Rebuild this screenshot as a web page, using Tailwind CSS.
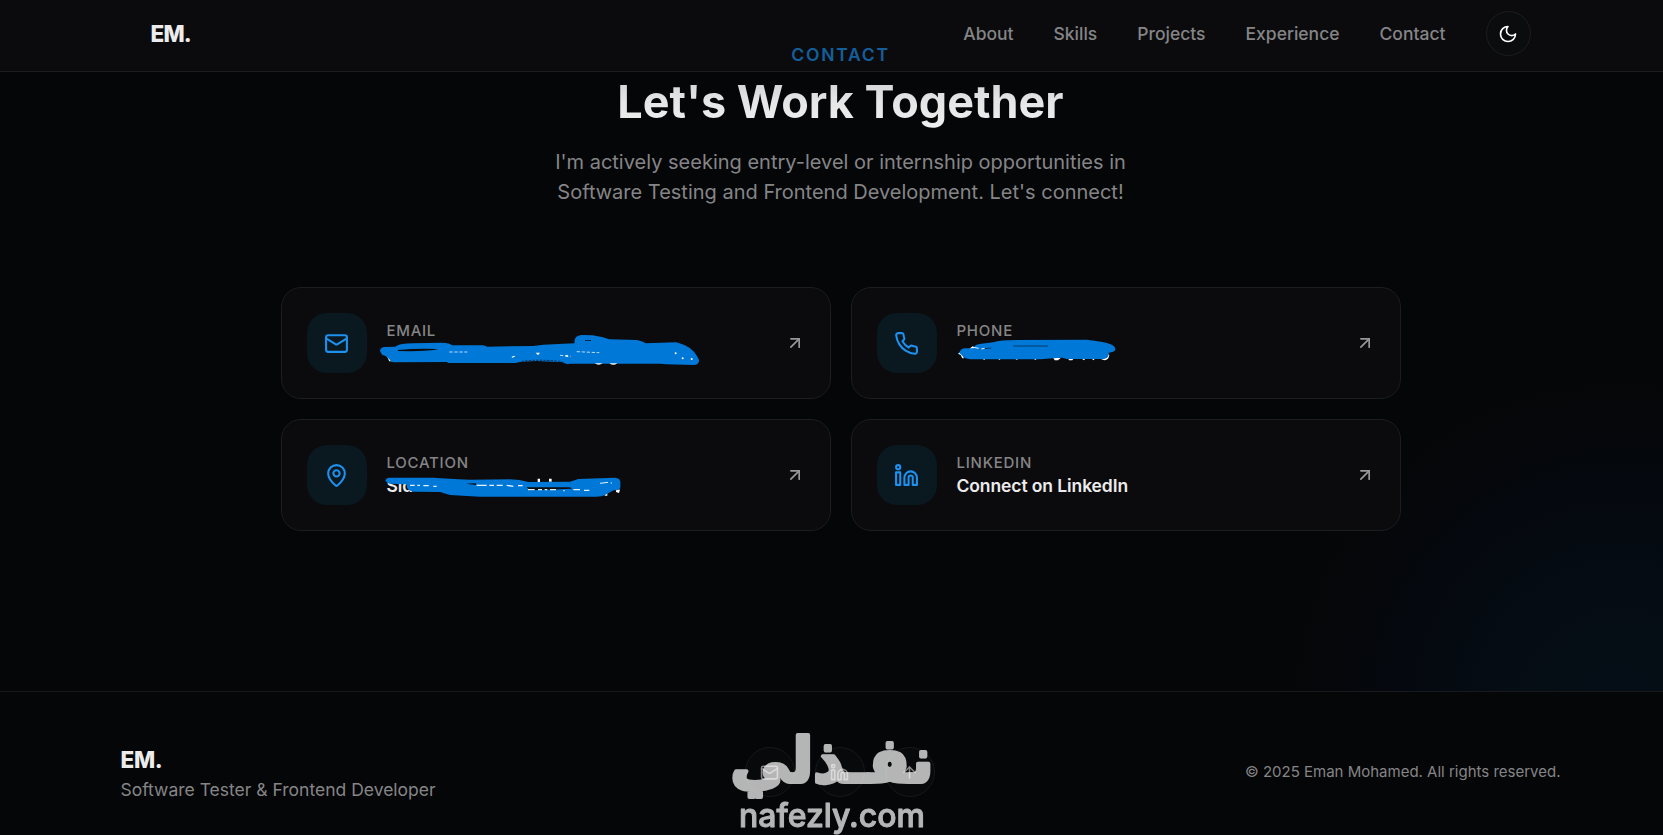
<!doctype html>
<html lang="en">
    <head>
        <meta charset="UTF-8" />
        <meta name="viewport" content="width=device-width, initial-scale=1.0" />
        <title>Eman Mohamed</title>
        <script src="https://cdn.jsdelivr.net/npm/@tailwindcss/browser@4"></script>
    </head>
    <body
        class="h-screen overflow-hidden bg-[#050607] font-['Inter',sans-serif] text-[#ececed] antialiased"
    >
        <div class="relative flex h-[852px] w-[1681px] flex-col">
            <main
                class="flex h-[691px] shrink-0 flex-col items-center bg-[radial-gradient(circle_at_1620px_710px,#050e16_0px,#050c14_130px,#05080e_230px,#050607_350px)] pt-[41px]"
            >
                <div class="flex flex-col items-center text-center">
                    <span
                        class="text-[17.5px] leading-[27px] font-semibold tracking-[1.75px] text-[#1590f0]"
                        >CONTACT</span
                    >
                    <h2
                        class="mt-[7px] bg-linear-to-b from-[#cfcfd2] via-[#e6e6e7] to-[#f0f0f0] bg-clip-text text-[45px] leading-[54px] font-bold text-transparent"
                    >
                        Let's Work Together
                    </h2>
                    <p class="mt-[18px] text-xl leading-[30px] text-[#858587]">
                        I'm actively seeking entry-level or internship
                        opportunities in<br />
                        Software Testing and Frontend Development. Let's connect!
                    </p>
                </div>

                <div class="mt-20 grid w-[1120px] grid-cols-2 gap-5">
                    <div
                        class="flex h-28 items-center gap-5 rounded-[20px] border border-[#1c1d1f] bg-[#0b0b0d] px-[25px]"
                    >
                        <div
                            class="flex size-[60px] items-center justify-center rounded-[20px] bg-[#0a1820] text-[#1e90ee]"
                        >
                            <svg class="size-[25px]" viewBox="0 0 24 24" fill="none" stroke="currentColor" stroke-width="2" stroke-linecap="round" stroke-linejoin="round">
                                <rect width="20" height="16" x="2" y="4" rx="2" />
                                <path d="m22 7-8.97 5.7a1.94 1.94 0 0 1-2.06 0L2 7" />
                            </svg>
                        </div>
                        <div class="relative h-11 flex-1">
                            <div class="text-[15px] leading-5 font-medium tracking-[0.72px] text-[#858587]">EMAIL</div>
                            <!-- scribble over the address -->
                            <svg class="absolute top-0 left-[-17px] h-[60px] w-[350px]" viewBox="0 0 1050 180">
                                <path fill="#fff" d="M50 104l8 17h12l-8-14z" />
                                <path
                                    fill="#0078d7"
                                    d="M30 90Q32 77 46 78L76 77Q90 67 130 67L215 65Q240 66 247 73L340 73L352 77L490 75Q520 70 550 70L614 67Q610 45 634 42L668 43Q700 48 718 55L800 57Q815 60 828 67L918 64Q950 72 966 87Q978 97 987 117Q988 132 970 132L890 130L870 128L600 128L592 130L578 124L500 120L455 122L435 126L235 126L230 123L70 124Q60 122 58 115L48 106L36 101Z"
                                />
                                <path fill="#0b0b0d" d="M84 87Q140 81 204 84Q180 92 84 90zM645 58h18v2h-18z" />
                                <path d="M238 93h54M620 92l68 3M570 103l32 3" stroke="#b8dcfa" stroke-width="3" stroke-dasharray="10 5" />
                                <path d="M455 121q55-7 122 1" stroke="#0b0b0d" stroke-width="2" stroke-dasharray="7 4" fill="none" />
                                <g fill="#fff">
                                    <path d="M497 95h13l-6 8zM424 108l8-4 4 2-8 4zM584 105l8-4 3 8zM674 127h24q-12 8-24 0zM718 127h24q-12 9-24 0z" />
                                    <circle cx="917" cy="97" r="3" />
                                    <circle cx="938" cy="112" r="3" />
                                    <circle cx="965" cy="114" r="3" />
                                </g>
                            </svg>
                        </div>
                        <svg class="size-5 text-[#98989a]" viewBox="0 0 24 24" fill="none" stroke="currentColor" stroke-width="2" stroke-linecap="round" stroke-linejoin="round">
                            <path d="M7 7h10v10" />
                            <path d="M7 17 17 7" />
                        </svg>
                    </div>

                    <div
                        class="flex h-28 items-center gap-5 rounded-[20px] border border-[#1c1d1f] bg-[#0b0b0d] px-[25px]"
                    >
                        <div
                            class="flex size-[60px] items-center justify-center rounded-[20px] bg-[#0a1820] text-[#1e90ee]"
                        >
                            <svg class="size-[25px]" viewBox="0 0 24 24" fill="none" stroke="currentColor" stroke-width="2" stroke-linecap="round" stroke-linejoin="round">
                                <path d="M22 16.92v3a2 2 0 0 1-2.18 2 19.79 19.79 0 0 1-8.63-3.07 19.5 19.5 0 0 1-6-6 19.79 19.79 0 0 1-3.07-8.67A2 2 0 0 1 4.11 2h3a2 2 0 0 1 2 1.72 12.84 12.84 0 0 0 .7 2.81 2 2 0 0 1-.45 2.11L8.09 9.91a16 16 0 0 0 6 6l1.27-1.27a2 2 0 0 1 2.11-.45 12.84 12.84 0 0 0 2.81.7A2 2 0 0 1 22 16.92z" />
                            </svg>
                        </div>
                        <div class="relative h-11 flex-1">
                            <div class="text-[15px] leading-5 font-medium tracking-[0.75px] text-[#858587]">PHONE</div>
                            <!-- scribble over the number -->
                            <svg class="absolute top-[15px] left-[-7px] h-[27px] w-[173px]" viewBox="330 180 519 81">
                                <path fill="#fff" d="M354 233l8-6 10 20h-5l-5-10zM388 218l10-7 8 4-6 10zM640 246h22l-8 7h-10zM684 246h18l-5 7h-10zM424 246h14l-5 6zM470 246h14l-5 6zM522 246h14l-5 6zM576 246h16l-5 6zM722 246h16l-6 7zM752 246h14l-5 7zM784 250l20-16 4 3q-2 15-14 16z" />
                                <path
                                    fill="#0078d7"
                                    d="M358 231Q360 219 374 217L400 217Q404 204 424 203L460 199Q480 192 530 192L740 191Q790 196 810 204Q826 210 826 220Q824 230 806 230Q808 246 792 249L680 249L668 245L640 247L600 250L390 250Q374 248 368 240Z"
                                />
                                <path d="M520 210h104M430 218l24-2" stroke="#063b6b" stroke-width="3" />
                                <path d="M400 214l16 3M424 219l10-2" stroke="#e8f3ff" stroke-width="3" />
                            </svg>
                        </div>
                        <svg class="size-5 text-[#98989a]" viewBox="0 0 24 24" fill="none" stroke="currentColor" stroke-width="2" stroke-linecap="round" stroke-linejoin="round">
                            <path d="M7 7h10v10" />
                            <path d="M7 17 17 7" />
                        </svg>
                    </div>

                    <div
                        class="flex h-28 items-center gap-5 rounded-[20px] border border-[#1c1d1f] bg-[#0b0b0d] px-[25px]"
                    >
                        <div
                            class="flex size-[60px] items-center justify-center rounded-[20px] bg-[#0a1820] text-[#1e90ee]"
                        >
                            <svg class="size-[25px]" viewBox="0 0 24 24" fill="none" stroke="currentColor" stroke-width="2" stroke-linecap="round" stroke-linejoin="round">
                                <path d="M20 10c0 4.993-5.539 10.193-7.399 11.799a1 1 0 0 1-1.202 0C9.539 20.193 4 14.993 4 10a8 8 0 0 1 16 0" />
                                <circle cx="12" cy="10" r="3" />
                            </svg>
                        </div>
                        <div class="relative h-11 flex-1">
                            <div class="text-[15px] leading-5 font-medium tracking-[0.75px] text-[#858587]">LOCATION</div>
                            <div class="text-[17.5px] leading-[26px] font-semibold tracking-[-0.1px]">Sid</div>
                            <!-- scribble over the city -->
                            <svg class="absolute top-[-3px] left-[-17px] h-[60px] w-[280px]" viewBox="0 0 840 180">
                                <path fill="#fff" d="M503 86h7v12h-7zM537 86h8v9h-8zM704 126h8v11h-8zM738 116l12 3-3 10-9-3z" />
                                <path
                                    fill="#0078d7"
                                    d="M46 93Q47 84 58 83L190 83Q230 86 300 89L420 88Q450 89 475 96L600 95L625 87L735 83Q750 84 751 95L751 112Q748 124 732 120L705 135Q695 140 680 140L330 140L240 135L210 126L130 125Q108 122 110 103L58 101Z"
                                />
                                <path fill="#0b0b0d" d="M288 101L318 100L318 105zM470 112L600 112L606 116L480 121z" />
                                <g fill="none" stroke="#e8f3ff" stroke-width="4">
                                    <path d="M120 106h14M142 106h8M160 107h16M190 109h10" />
                                    <path d="M320 106h30M358 106h14M380 106h18M410 106l20 3M444 107h14" />
                                    <path d="M474 119h20M504 119h12M524 119h8M540 119h18M580 122h4M610 119h20M642 121h16" />
                                    <path d="M690 100l24-3M722 98l4 2" stroke-width="3" />
                                </g>
                            </svg>
                        </div>
                        <svg class="size-5 text-[#98989a]" viewBox="0 0 24 24" fill="none" stroke="currentColor" stroke-width="2" stroke-linecap="round" stroke-linejoin="round">
                            <path d="M7 7h10v10" />
                            <path d="M7 17 17 7" />
                        </svg>
                    </div>

                    <div
                        class="flex h-28 items-center gap-5 rounded-[20px] border border-[#1c1d1f] bg-[#0b0b0d] px-[25px]"
                    >
                        <div
                            class="flex size-[60px] items-center justify-center rounded-[20px] bg-[#0a1820] text-[#1e90ee]"
                        >
                            <svg class="size-[25px]" viewBox="0 0 24 24" fill="none" stroke="currentColor" stroke-width="2" stroke-linecap="round" stroke-linejoin="round">
                                <path d="M16 8a6 6 0 0 1 6 6v7h-4v-7a2 2 0 0 0-2-2 2 2 0 0 0-2 2v7h-4v-7a6 6 0 0 1 6-6z" />
                                <rect width="4" height="12" x="2" y="9" />
                                <circle cx="4" cy="4" r="2" />
                            </svg>
                        </div>
                        <div class="h-11 flex-1">
                            <div class="text-[15px] leading-5 font-medium tracking-[0.75px] text-[#858587]">LINKEDIN</div>
                            <div class="text-[17.5px] leading-[26px] font-semibold tracking-[-0.1px]">Connect on LinkedIn</div>
                        </div>
                        <svg class="size-5 text-[#98989a]" viewBox="0 0 24 24" fill="none" stroke="currentColor" stroke-width="2" stroke-linecap="round" stroke-linejoin="round">
                            <path d="M7 7h10v10" />
                            <path d="M7 17 17 7" />
                        </svg>
                    </div>
                </div>
            </main>

            <footer class="flex-1 border-t border-[#17191c] bg-[#050607]">
                <div
                    class="mx-auto grid w-[1440px] grid-cols-[1fr_auto_1fr] items-center pt-[49px]"
                >
                    <div class="pt-0.5">
                        <div class="text-[22.5px] leading-[34px] font-extrabold tracking-[-0.3px]">EM.</div>
                        <div class="text-[17.5px] leading-[26px] text-[#858587]">
                            Software Tester &amp; Frontend Developer
                        </div>
                    </div>
                    <div class="mr-0.5 flex gap-5 text-[#858587]">
                        <div class="flex size-[50px] items-center justify-center rounded-full border border-[#17181a] bg-[#08090a]">
                            <svg class="size-[19px]" viewBox="0 0 24 24" fill="none" stroke="currentColor" stroke-width="2" stroke-linecap="round" stroke-linejoin="round">
                                <rect width="20" height="16" x="2" y="4" rx="2" />
                                <path d="m22 7-8.97 5.7a1.94 1.94 0 0 1-2.06 0L2 7" />
                            </svg>
                        </div>
                        <div class="flex size-[50px] items-center justify-center rounded-full border border-[#17181a] bg-[#08090a]">
                            <svg class="size-[19px]" viewBox="0 0 24 24" fill="none" stroke="currentColor" stroke-width="2" stroke-linecap="round" stroke-linejoin="round">
                                <path d="M16 8a6 6 0 0 1 6 6v7h-4v-7a2 2 0 0 0-2-2 2 2 0 0 0-2 2v7h-4v-7a6 6 0 0 1 6-6z" />
                                <rect width="4" height="12" x="2" y="9" />
                                <circle cx="4" cy="4" r="2" />
                            </svg>
                        </div>
                        <div class="flex size-[50px] items-center justify-center rounded-full border border-[#17181a] bg-[#08090a]">
                            <svg class="size-[19px]" viewBox="0 0 24 24" fill="none" stroke="currentColor" stroke-width="2" stroke-linecap="round" stroke-linejoin="round">
                                <path d="m5 12 7-7 7 7" />
                                <path d="M12 19V5" />
                            </svg>
                        </div>
                    </div>
                    <div class="text-right text-[15px] text-[#858587]">
                        © 2025 Eman Mohamed. All rights reserved.
                    </div>
                </div>
            </footer>

            <nav
                class="absolute inset-x-0 top-0 h-[72px] border-b border-[#1c1d1f] bg-[#141417]/40"
            >
                <div class="mx-auto flex w-[1380px] items-center justify-between pt-[11px]">
                    <div class="text-[22.5px] font-extrabold tracking-[-0.8px]">EM.</div>
                    <div class="flex items-center gap-10 text-[17.5px] font-medium text-[#858587]">
                        <a class="pt-0.5">About</a>
                        <a class="pt-0.5">Skills</a>
                        <a class="pt-0.5">Projects</a>
                        <a class="pt-0.5">Experience</a>
                        <a class="pt-0.5">Contact</a>
                        <button class="flex size-[45px] items-center justify-center rounded-full border border-[#1c1d1f] bg-[#0b0c0e] text-white">
                            <svg class="size-5" viewBox="0 0 24 24" fill="none" stroke="currentColor" stroke-width="2" stroke-linecap="round" stroke-linejoin="round">
                                <path d="M12 3a6 6 0 0 0 9 9 9 9 0 1 1-9-9Z" />
                            </svg>
                        </button>
                    </div>
                </div>
            </nav>

            <!-- watermark -->
            <svg
                class="absolute top-[715px] left-[700px] h-[120px] w-[260px] opacity-70"
                viewBox="0 0 260 120"
                fill="#fff"
                stroke="#fff"
                stroke-linejoin="round"
            >
                <text x="132" y="67" direction="rtl" text-anchor="middle" textLength="203" lengthAdjust="spacingAndGlyphs" font-family="DejaVu Sans" font-weight="700" font-size="62" stroke-width="4">نفـذلي</text>
                <text x="39" y="112" textLength="186" lengthAdjust="spacingAndGlyphs" font-family="Inter" font-weight="500" font-size="33" stroke-width="1">nafezly.com</text>
            </svg>
        </div>
    </body>
</html>
